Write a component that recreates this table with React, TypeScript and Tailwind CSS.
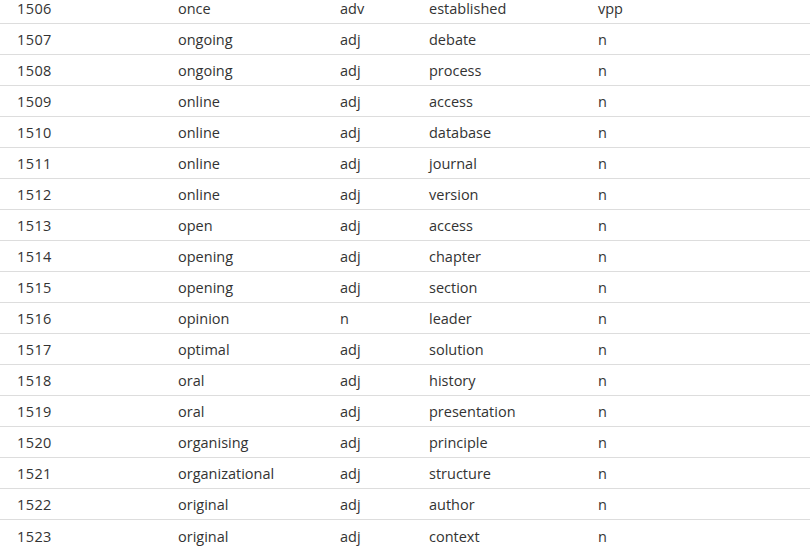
const rows: [number, string, string, string, string][] = [
  [1506, "once", "adv", "established", "vpp"],
  [1507, "ongoing", "adj", "debate", "n"],
  [1508, "ongoing", "adj", "process", "n"],
  [1509, "online", "adj", "access", "n"],
  [1510, "online", "adj", "database", "n"],
  [1511, "online", "adj", "journal", "n"],
  [1512, "online", "adj", "version", "n"],
  [1513, "open", "adj", "access", "n"],
  [1514, "opening", "adj", "chapter", "n"],
  [1515, "opening", "adj", "section", "n"],
  [1516, "opinion", "n", "leader", "n"],
  [1517, "optimal", "adj", "solution", "n"],
  [1518, "oral", "adj", "history", "n"],
  [1519, "oral", "adj", "presentation", "n"],
  [1520, "organising", "adj", "principle", "n"],
  [1521, "organizational", "adj", "structure", "n"],
  [1522, "original", "adj", "author", "n"],
  [1523, "original", "adj", "context", "n"],
];

export default function App() {
  return (
    <div className="h-[548px] w-[810px] overflow-hidden bg-white font-['Open_Sans',sans-serif] text-[14.5px] text-[#333]">
      {/* list is scrolled: first row sits partly above the viewport */}
      <div className="-mt-[7px]">
        {rows.map(([id, word, pos, coll, cpos], i) => (
          <div
            key={id}
            className={
              "grid h-[31px] grid-cols-[178px_162px_89px_169px_1fr] items-center pt-[2px] " +
              (i < rows.length - 1 ? "border-b border-[#dddddd]" : "")
            }
          >
            <span className="pl-[17px] tracking-[0.4px]">{id}</span>
            <span>{word}</span>
            <span>{pos}</span>
            <span>{coll}</span>
            <span>{cpos}</span>
          </div>
        ))}
      </div>
    </div>
  );
}
